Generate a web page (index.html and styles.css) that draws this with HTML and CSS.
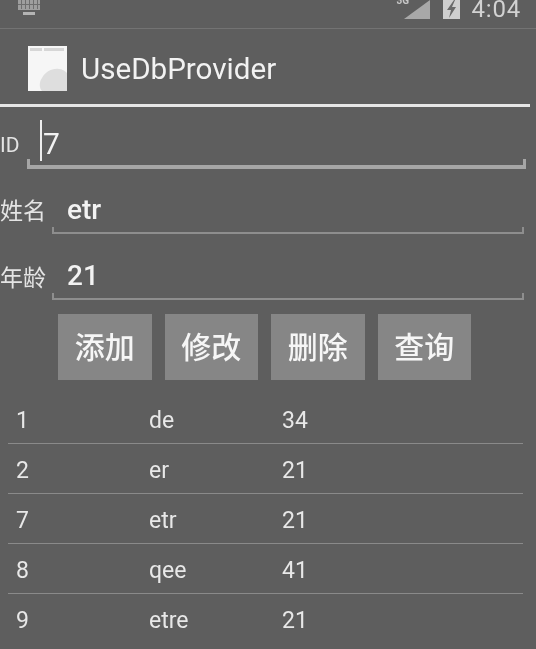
FILE: index.html
```html
<!DOCTYPE html>
<html lang="zh">
<head>
    <meta charset="UTF-8">
    <meta name="viewport" content="width=device-width, initial-scale=1.0">
    <title>UseDbProvider</title>
    <link rel="stylesheet" href="styles.css">
</head>
<body>
<div class="screen">
    <div class="status-bar">
        <svg class="keyboard" width="24" height="16" viewBox="0 0 24 16">
            <g fill="#b4b4b4">
                <path d="M1 0h22v10H1z" opacity="0.75"/>
                <path d="M6 12h12v3H6z"/>
            </g>
            <g fill="#6e6e6e">
                <path d="M4 0h1v9H4zM8 0h1v9H8zM12 0h1v9h-1zM16 0h1v9h-1zM20 0h1v9h-1zM1 4h22v1H1z"/>
            </g>
        </svg>
        <div class="status-right">
            <div class="signal">
                <span class="net">3G</span>
                <svg width="26" height="19" viewBox="0 0 26 19"><path d="M0 19 26 0v19z" fill="#a8a8a8"/></svg>
            </div>
            <svg class="battery" width="17" height="19" viewBox="0 0 17 19">
                <path d="M0 0h17v19H0z" fill="#cfcfcf"/>
                <path d="M11 0 4 10h4l-2 8 7-11H9l3-7z" fill="#6a6a6a"/>
            </svg>
            <span class="clock">4:04</span>
        </div>
    </div>

    <div class="action-bar">
        <svg class="app-icon" width="39" height="45" viewBox="0 0 39 45">
            <path d="M0 0h39v45H0z" fill="#f6f6f6"/>
            <path d="M2 2h12v3H2zM16 2h20v3H16z" fill="#d6d6d6"/>
            <path d="M14 45c-3-3-3-9 0-13 3-6 10-10 17-9 3 0 6 2 8 4v18z" fill="#dedede"/>
        </svg>
        <span class="app-title">UseDbProvider</span>
    </div>
    <div class="action-rule"></div>

    <div class="form-row row-id">
        <label class="row-label label-id">ID</label>
        <div class="field field-focus">
            <span class="cursor"></span>
            <span class="field-value value-id">7</span>
        </div>
    </div>
    <div class="form-row row-name">
        <label class="row-label">姓名</label>
        <div class="field"><span class="field-value">etr</span></div>
    </div>
    <div class="form-row row-age">
        <label class="row-label">年龄</label>
        <div class="field"><span class="field-value">21</span></div>
    </div>

    <div class="buttons">
        <button class="btn">添加</button>
        <button class="btn">修改</button>
        <button class="btn">删除</button>
        <button class="btn">查询</button>
    </div>

    <div class="list">
        <div class="list-row"><span>1</span><span>de</span><span>34</span></div>
        <div class="list-row"><span>2</span><span>er</span><span>21</span></div>
        <div class="list-row"><span>7</span><span>etr</span><span>21</span></div>
        <div class="list-row"><span>8</span><span>qee</span><span>41</span></div>
        <div class="list-row"><span>9</span><span>etre</span><span>21</span></div>
    </div>
</div>
</body>
</html>
```
FILE: styles.css
```css
html, body {
    margin: 0;
    padding: 0;
    background-color: #5e5e5e;
}
.screen {
    width: 536px;
    height: 649px;
    overflow: hidden;
    color: #f2f2f2;
    font-family: Roboto, "Noto Sans CJK SC", sans-serif;
    background-color: #5e5e5e;
    filter: blur(0.4px);
}
.status-bar {
    height: 28px;
    display: flex;
    justify-content: space-between;
    padding: 0 15px 0 17px;
    border-bottom: 1px solid #737373;
    overflow: hidden;
}
.status-right {
    display: flex;
    align-items: flex-start;
}
.signal {
    position: relative;
    width: 26px;
    height: 19px;
}
.net {
    position: absolute;
    left: -7px;
    top: -5px;
    font-size: 10px;
    font-weight: bold;
    color: #c8c8c8;
}
.battery {
    margin-left: 13px;
}
.clock {
    margin-left: 12px;
    font-size: 24px;
    line-height: 18px;
    letter-spacing: 0.8px;
    color: #d2d2d2;
}
.action-bar {
    height: 75px;
    display: flex;
    align-items: center;
    padding-left: 28px;
    gap: 14px;
    box-sizing: border-box;
}
.app-icon {
    margin-top: 3px;
}
.app-title {
    font-size: 29.6px;
    margin-top: 4px;
}
.action-rule {
    width: 530px;
    height: 3px;
    background-color: #e6e6e6;
}
.form-row {
    display: flex;
    align-items: flex-start;
}
.row-label {
    width: 52px;
    flex: none;
    font-size: 23px;
    color: #e4e4e4;
}
.field {
    position: relative;
    box-sizing: border-box;
    border-bottom: 2px solid #8e8e8e;
    font-size: 28px;
    font-weight: 500;
    padding-left: 15px;
    width: 472px;
}
/* the little end ticks of the holo underline */
.field::before,
.field::after {
    content: "";
    position: absolute;
    bottom: 0;
    width: 2px;
    height: 5px;
    background-color: #8e8e8e;
}
.field::before {
    left: 0;
}
.field::after {
    right: 0;
}
.row-id {
    height: 62px;
}
.label-id {
    width: 27px;
    padding-top: 26px;
    font-size: 21px;
}
.field-focus {
    width: 499px;
    height: 62px;
    border-bottom: 4px solid #a6a6a6;
    padding-left: 16px;
    font-weight: 400;
}
.field-focus::before,
.field-focus::after {
    width: 3px;
    height: 6px;
    background-color: #a6a6a6;
}
.value-id {
    font-size: 30px;
    line-height: 73px;
}
.cursor {
    position: absolute;
    left: 13px;
    top: 13px;
    width: 2px;
    height: 41px;
    background-color: #eeeeee;
}
.field:not(.field-focus) .field-value {
    display: block;
    line-height: 35px;
}
.row-name {
    height: 65px;
}
.row-age {
    height: 66px;
}
.row-name .row-label {
    padding-top: 23px;
}
.row-name .field {
    height: 65px;
    padding-top: 23px;
}
.row-age .row-label {
    padding-top: 25px;
}
.row-age .field {
    height: 66px;
    padding-top: 24px;
}
.buttons {
    display: flex;
    gap: 13px;
    padding-left: 58px;
    margin-top: 14px;
}
.btn {
    width: 93.5px;
    height: 66px;
    border: none;
    border-radius: 0;
    padding: 0 0 4px;
    background-color: #868686;
    color: #f6f6f6;
    font-family: inherit;
    font-size: 30px;
    font-weight: 500;
}
.list {
    margin: 14px 13px 0 8px;
}
.list-row {
    display: grid;
    grid-template-columns: 133px 133px 1fr;
    height: 47px;
    padding-top: 2px;
    line-height: 49px;
    padding-left: 8px;
    font-size: 23px;
    color: #e8e8e8;
    border-bottom: 1px solid #8a8a8a;
}
.list-row:last-child {
    border-bottom: none;
}
```
